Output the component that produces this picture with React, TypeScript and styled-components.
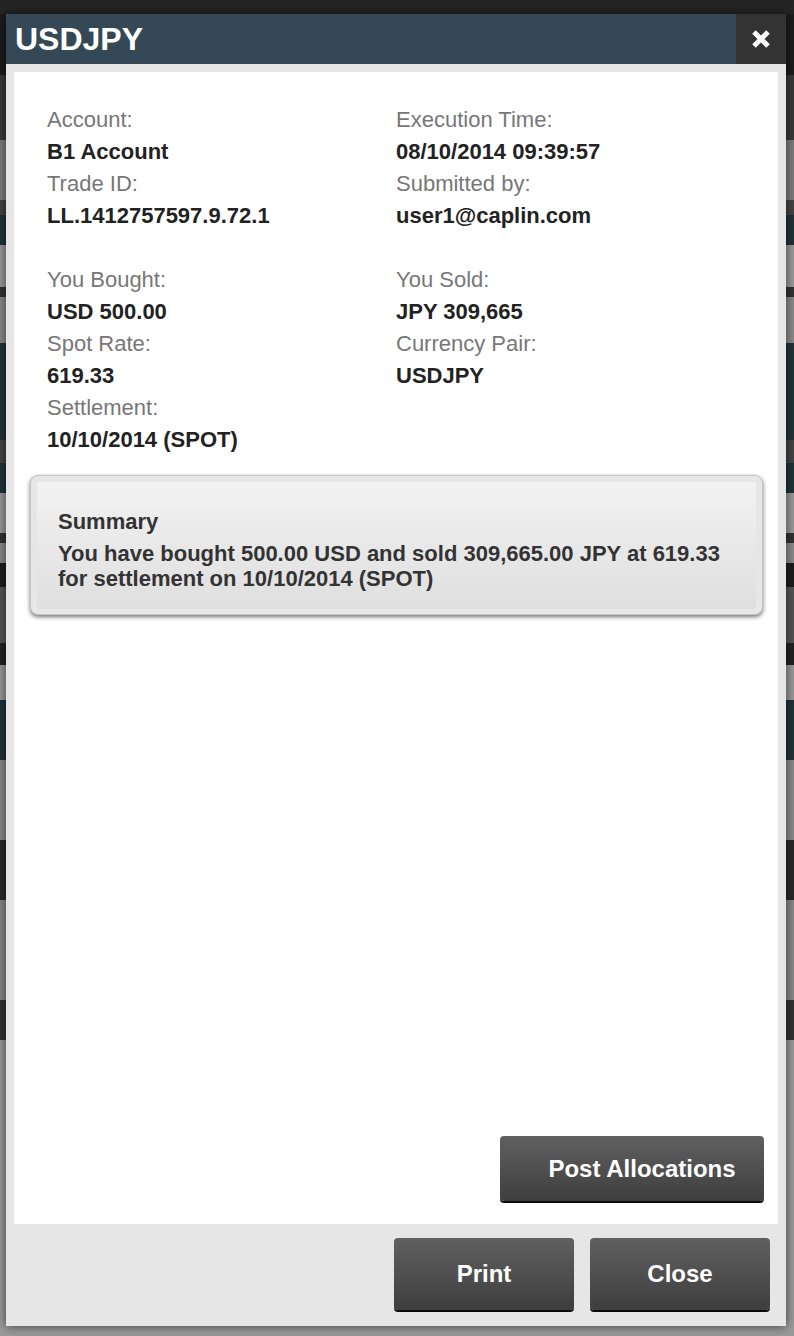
import styled, { createGlobalStyle } from 'styled-components'

const GlobalStyle = createGlobalStyle`
  html, body {
    margin: 0;
    padding: 0;
  }
  body {
    font-family: "Liberation Sans", Arial, Helvetica, sans-serif;
    background: #222;
  }
`

const tradeInfo = [
  [
    [
      { label: 'Account:', value: 'B1 Account' },
      { label: 'Trade ID:', value: 'LL.1412757597.9.72.1' },
    ],
    [
      { label: 'Execution Time:', value: '08/10/2014 09:39:57' },
      { label: 'Submitted by:', value: 'user1@caplin.com' },
    ],
  ],
  [
    [
      { label: 'You Bought:', value: 'USD 500.00' },
      { label: 'Spot Rate:', value: '619.33' },
      { label: 'Settlement:', value: '10/10/2014 (SPOT)' },
    ],
    [
      { label: 'You Sold:', value: 'JPY 309,665' },
      { label: 'Currency Pair:', value: 'USDJPY' },
    ],
  ],
]

function CloseIcon () {
  return (
    <svg width='18' height='18' viewBox='0 0 18 18'>
      <path d='M2 2 L16 16 M16 2 L2 16' stroke='#fff' strokeWidth='5' fill='none' />
    </svg>
  )
}

export default function App () {
  return (
    <>
      <GlobalStyle />
      <Stage>
        <Modal>
          <Header>
            <Title>USDJPY</Title>
            <CloseButton aria-label='close'>
              <CloseIcon />
            </CloseButton>
          </Header>
          <Content>
            <Panel>
              <Details>
                {tradeInfo.map((section, i) => (
                  <Section key={i}>
                    {section.map((column, j) => (
                      <Column key={j}>
                        {column.map((field) => (
                          <div key={field.label}>
                            <Label>{field.label}</Label>
                            <Value>{field.value}</Value>
                          </div>
                        ))}
                      </Column>
                    ))}
                  </Section>
                ))}
              </Details>
              <SummaryBox>
                <SummaryInner>
                  <SummaryTitle>Summary</SummaryTitle>
                  <SummaryText>
                    You have bought 500.00 USD and sold 309,665.00 JPY at 619.33
                    <br />
                    for settlement on 10/10/2014 (SPOT)
                  </SummaryText>
                </SummaryInner>
              </SummaryBox>
              <PanelActions>
                <DarkButton $width={264} $height={65} $pad='0 28px 0 48px'>Post Allocations</DarkButton>
              </PanelActions>
            </Panel>
          </Content>
          <Footer>
            <DarkButton $width={180} $height={72}>Print</DarkButton>
            <DarkButton $width={180} $height={72}>Close</DarkButton>
          </Footer>
        </Modal>
      </Stage>
    </>
  )
}

const Stage = styled.div`
  width: 794px;
  height: 1336px;
  box-sizing: border-box;
  padding: 14px 8px 10px 6px;
  overflow: hidden;
  background: linear-gradient(
    to bottom,
    #252525 0 14px,
    #1d1d1d 14px 75px,
    #3a3a3a 75px 140px,
    #7d7d7d 140px 200px,
    #444 200px 215px,
    #22323a 215px 245px,
    #9a9a9a 245px 287px,
    #333 287px 297px,
    #8a8a8a 297px 343px,
    #22323a 343px 440px,
    #444 440px 463px,
    #22323a 463px 493px,
    #999 493px 533px,
    #333 533px 543px,
    #8a8a8a 543px 563px,
    #1e1e1e 563px 587px,
    #555 587px 643px,
    #222 643px 665px,
    #999 665px 700px,
    #22323a 700px 760px,
    #8a8a8a 760px 840px,
    #2a2a2a 840px 900px,
    #888 900px 1000px,
    #333 1000px 1040px,
    #9a9a9a 1040px 1336px
  );
`

const Modal = styled.div`
  width: 780px;
  height: 1312px;
  display: flex;
  flex-direction: column;
  background: #e6e6e6;
  box-shadow: 0 0 10px rgba(0, 0, 0, 0.6);
`

const Header = styled.header`
  display: flex;
  height: 50px;
  flex-shrink: 0;
  align-items: center;
  background: #344955;
`

const Title = styled.h1`
  flex: 1;
  margin: 0;
  padding-left: 9px;
  font-size: 32px;
  line-height: 50px;
  font-weight: bold;
  color: #fff;
`

const CloseButton = styled.button`
  display: flex;
  width: 50px;
  height: 50px;
  padding: 0;
  border: none;
  align-items: center;
  justify-content: center;
  background: #333;
  cursor: pointer;
`

const Content = styled.div`
  display: flex;
  flex: 1;
  flex-direction: column;
  padding: 8px 8px 0;
`

const Panel = styled.div`
  display: flex;
  flex: 1;
  flex-direction: column;
  background: #fff;
`

const Details = styled.div`
  display: flex;
  flex-direction: column;
  gap: 32px;
  padding: 32px 33px 0;
`

const Section = styled.div`
  display: grid;
  grid-template-columns: 1fr 1fr;
`

const Column = styled.div`
  display: flex;
  flex-direction: column;
`

const Label = styled.div`
  font-size: 22px;
  line-height: 32px;
  color: #777;
`

const Value = styled.div`
  font-size: 22px;
  line-height: 32px;
  font-weight: bold;
  color: #222;
`

const SummaryBox = styled.div`
  margin: 19px 15px 0 16px;
  padding: 6px 6px 5px 6px;
  border: 1px solid #c4c4c4;
  border-radius: 8px;
  background: #e6e6e6;
  box-shadow: 0 2px 4px rgba(0, 0, 0, 0.55);
`

const SummaryInner = styled.div`
  padding: 27px 20px 18px 21px;
  border-radius: 3px;
  background: linear-gradient(to bottom, #f2f2f2, #dfdfdf);
  color: #333;
`

const SummaryTitle = styled.div`
  margin-bottom: 6px;
  font-size: 22px;
  line-height: 26px;
  font-weight: bold;
`

const SummaryText = styled.div`
  font-size: 22px;
  line-height: 25px;
  font-weight: bold;
`

const PanelActions = styled.div`
  display: flex;
  flex: 1;
  align-items: flex-end;
  justify-content: flex-end;
  padding: 0 14px 23px 0;
`

const DarkButton = styled.button<{ $width: number; $height: number; $pad?: string }>`
  width: ${(p) => p.$width}px;
  height: ${(p) => p.$height}px;
  padding: ${(p) => p.$pad || '0'};
  border: none;
  border-radius: 4px;
  font-family: "Liberation Sans", Arial, Helvetica, sans-serif;
  font-size: 24px;
  font-weight: bold;
  color: #fff;
  background: linear-gradient(to bottom, #606060, #3e3e3e);
  box-shadow: 0 2px 0 #0a0a0a;
  cursor: pointer;
`

const Footer = styled.footer`
  display: flex;
  flex-shrink: 0;
  justify-content: flex-end;
  gap: 16px;
  padding: 14px 16px 16px;
`
